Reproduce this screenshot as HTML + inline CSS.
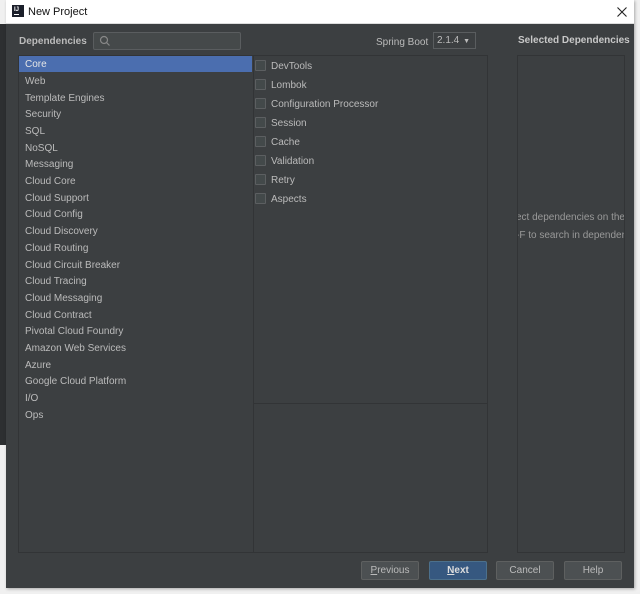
<!DOCTYPE html>
<html><head><meta charset="utf-8"><style>
*{margin:0;padding:0;box-sizing:border-box}
body{width:640px;height:594px;overflow:hidden;background:#f0f0f0;font-family:"Liberation Sans",sans-serif;position:relative}
.abs{position:absolute}
.strip{left:0;top:24px;width:6px;height:421px;background:#2d2f31}
.win{left:6px;top:0;width:628px;height:588px;background:#3c3f41;box-shadow:1px 1px 3px rgba(0,0,0,.3)}
.title{left:0;top:0;width:628px;height:24px;background:#fff;border-bottom:1px solid #ddd}
.title span{position:absolute;left:22px;top:6px;font-size:11px;color:#111}
.logo{position:absolute;left:6px;top:5px;width:12px;height:12px;background:#1b1f2a}
.logo i{position:absolute;left:2px;top:2px;font-style:normal;font-size:6px;color:#fff;font-weight:bold;line-height:6px}
.logo b{position:absolute;left:2px;bottom:2px;width:5px;height:1px;background:#fff}
.lbl{color:#bbb;font-size:10px}
.panel{border:1px solid #323436;background:#3c3f41}
.item{position:absolute;left:19px;font-size:10px;color:#bbb;width:233px;height:16px;line-height:16px;padding-left:6px;padding-top:2px;line-height:14px}
.sel{background:#4b6eaf;color:#e6e6e6}
.cb{position:absolute;left:255px;width:11px;height:11px;border:1px solid #5c5f61;background:#43494a;border-radius:1px}
.ct{position:absolute;left:271px;font-size:10px;color:#bbb}
.btn{position:absolute;top:561px;height:19px;border:1px solid #5e6060;background:#4c5052;color:#bbb;font-size:10px;text-align:center;line-height:17px;border-radius:2px}
</style></head><body>
<div class="abs strip"></div>
<div class="abs win">
 <div class="abs title"><div class="logo"><i>IJ</i><b></b></div><span>New Project</span>
 <svg width="10" height="10" style="position:absolute;right:7px;top:7px"><path d="M0.5 0.5L9.5 9.5M9.5 0.5L0.5 9.5" stroke="#222" stroke-width="1.1"/></svg></div>
</div>
<div class="abs lbl" style="left:19px;top:36px;font-weight:bold">Dependencies</div>
<div class="abs" style="left:93px;top:32px;width:148px;height:18px;border:1px solid #5a5d5f;background:#45494a;border-radius:2px"><svg width="12" height="12" style="position:absolute;left:5px;top:2px"><circle cx="5" cy="5" r="3.5" stroke="#888" fill="none" stroke-width="1.2"/><line x1="7.5" y1="7.5" x2="10.5" y2="10.5" stroke="#888" stroke-width="1.2"/></svg></div>
<div class="abs lbl" style="left:376px;top:37px">Spring Boot</div>
<div class="abs" style="left:433px;top:32px;width:43px;height:17px;border:1px solid #5a5d5f;background:#3c3f41;color:#bbb;font-size:10px;line-height:16px;padding-left:3px">2.1.4 <span style="font-size:7px;position:absolute;right:5px;top:1px">▼</span></div>
<div class="abs lbl" style="left:518px;top:35px;font-weight:bold;color:#c8c8c8">Selected Dependencies</div>
<div class="abs panel" style="left:18px;top:55px;width:236px;height:498px"></div>
<div class="abs panel" style="left:253px;top:55px;width:235px;height:349px"></div>
<div class="abs panel" style="left:253px;top:403px;width:235px;height:150px"></div>
<div class="abs panel" style="left:517px;top:55px;width:108px;height:498px;overflow:hidden">
 <div style="position:absolute;left:-2px;top:156px;white-space:nowrap;font-size:10px;color:#999">ect dependencies on the</div>
 <div style="position:absolute;left:-2px;top:174px;white-space:nowrap;font-size:10px;color:#999">-F to search in dependencies</div>
</div>
<div class="item sel" style="top:56px">Core</div>
<div class="item" style="top:73px">Web</div>
<div class="item" style="top:90px">Template Engines</div>
<div class="item" style="top:106px">Security</div>
<div class="item" style="top:123px">SQL</div>
<div class="item" style="top:140px">NoSQL</div>
<div class="item" style="top:156px">Messaging</div>
<div class="item" style="top:173px">Cloud Core</div>
<div class="item" style="top:190px">Cloud Support</div>
<div class="item" style="top:206px">Cloud Config</div>
<div class="item" style="top:223px">Cloud Discovery</div>
<div class="item" style="top:240px">Cloud Routing</div>
<div class="item" style="top:257px">Cloud Circuit Breaker</div>
<div class="item" style="top:273px">Cloud Tracing</div>
<div class="item" style="top:290px">Cloud Messaging</div>
<div class="item" style="top:307px">Cloud Contract</div>
<div class="item" style="top:323px">Pivotal Cloud Foundry</div>
<div class="item" style="top:340px">Amazon Web Services</div>
<div class="item" style="top:357px">Azure</div>
<div class="item" style="top:373px">Google Cloud Platform</div>
<div class="item" style="top:390px">I/O</div>
<div class="item" style="top:407px">Ops</div>
<div class="cb" style="top:60px"></div><div class="ct" style="top:61px">DevTools</div>
<div class="cb" style="top:79px"></div><div class="ct" style="top:80px">Lombok</div>
<div class="cb" style="top:98px"></div><div class="ct" style="top:99px">Configuration Processor</div>
<div class="cb" style="top:117px"></div><div class="ct" style="top:118px">Session</div>
<div class="cb" style="top:136px"></div><div class="ct" style="top:137px">Cache</div>
<div class="cb" style="top:155px"></div><div class="ct" style="top:156px">Validation</div>
<div class="cb" style="top:174px"></div><div class="ct" style="top:175px">Retry</div>
<div class="cb" style="top:193px"></div><div class="ct" style="top:194px">Aspects</div>
<div class="btn" style="left:361px;width:58px"><u>P</u>revious</div>
<div class="btn" style="left:429px;width:58px;background:#365880;border-color:#4c708c;color:#ddd;font-weight:bold"><u>N</u>ext</div>
<div class="btn" style="left:496px;width:58px">Cancel</div>
<div class="btn" style="left:564px;width:58px">Help</div>
</body></html>
